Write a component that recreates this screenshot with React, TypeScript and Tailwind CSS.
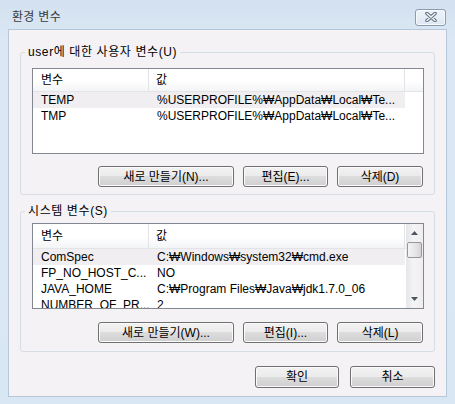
import React from 'react';

type EnvVar = { name: string; value: string };

const userVars: EnvVar[] = [
  { name: 'TEMP', value: '%USERPROFILE%₩AppData₩Local₩Te...' },
  { name: 'TMP', value: '%USERPROFILE%₩AppData₩Local₩Te...' },
];

const systemVars: EnvVar[] = [
  { name: 'ComSpec', value: 'C:₩Windows₩system32₩cmd.exe' },
  { name: 'FP_NO_HOST_C...', value: 'NO' },
  { name: 'JAVA_HOME', value: 'C:₩Program Files₩Java₩jdk1.7.0_06' },
  { name: 'NUMBER_OF_PR...', value: '2' },
];

function WinButton({ label, className = '' }: { label: string; className?: string }) {
  return (
    <button
      type="button"
      className={`flex items-center justify-center rounded-[3px] border border-[#707070] bg-[linear-gradient(to_bottom,#f2f2f2_0%,#ebebeb_50%,#dddddd_50%,#cfcfcf_100%)] shadow-[inset_0_0_0_1px_#fbfbfb] text-[12px] leading-[14px] text-black ${className}`}
    >
      {label}
    </button>
  );
}

function Arrow({ down = false }: { down?: boolean }) {
  return (
    <svg width="7" height="4" viewBox="0 0 7 4">
      {down ? <path d="M0 0 H7 L3.5 4 Z" fill="#4d5560" /> : <path d="M0 4 H7 L3.5 0 Z" fill="#4d5560" />}
    </svg>
  );
}

function ScrollBar() {
  return (
    <div className="w-[17px] shrink-0 flex flex-col bg-[linear-gradient(to_right,#e6e6e9,#f4f4f6_45%,#eeeef1)]">
      <div className="h-[18px] flex items-center justify-center">
        <Arrow />
      </div>
      <div className="mx-[1px] h-[16px] rounded-[2px] border border-[#979797] bg-[linear-gradient(to_right,#f4f4f4,#e4e4e6_60%,#d4d4d8)]" />
      <div className="flex-1" />
      <div className="h-[18px] flex items-center justify-center">
        <Arrow down />
      </div>
    </div>
  );
}

function ListBox({ rows, headerHeight, scroll }: { rows: EnvVar[]; headerHeight: string; scroll?: boolean }) {
  return (
    <div className="ml-[11px] w-[392px] h-[86px] border border-[#828790] bg-white flex overflow-hidden">
      <div className="flex-1 min-w-0 flex flex-col">
        <div className={`flex shrink-0 ${headerHeight} bg-[linear-gradient(to_bottom,#ffffff_55%,#f3f4f6)] border-b border-[#e2e4e7]`}>
          <div className="w-[116px] shrink-0 border-r border-[#e2e4e7] pl-[8px] flex items-center">변수</div>
          <div className="w-[256px] shrink-0 border-r border-[#e2e4e7] pl-[7px] flex items-center">값</div>
          <div className="flex-1" />
        </div>
        {rows.map((row, i) => (
          <div
            key={row.name}
            className={`flex shrink-0 w-[372px] h-[16px] leading-[16px] ${i === 0 ? 'bg-[#f0eef1]' : ''}`}
          >
            <div className="w-[116px] shrink-0 pl-[8px] whitespace-nowrap overflow-hidden">{row.name}</div>
            <div className="w-[256px] shrink-0 pl-[8px] whitespace-nowrap overflow-hidden">{row.value}</div>
          </div>
        ))}
      </div>
      {scroll && <ScrollBar />}
    </div>
  );
}

function ButtonRow({ labels, className = '' }: { labels: [string, string, string]; className?: string }) {
  return (
    <div className={`flex justify-end gap-[9px] pr-[11px] ${className}`}>
      <WinButton label={labels[0]} className="w-[136px] h-[21px]" />
      <WinButton label={labels[1]} className="w-[85px] h-[21px]" />
      <WinButton label={labels[2]} className="w-[86px] h-[21px]" />
    </div>
  );
}

export default function App() {
  return (
    <div className="w-[455px] h-[404px] flex flex-col bg-[linear-gradient(to_bottom,#d3e1f0,#dbe7f4_40px,#d9e6f4)] text-[12px] text-black font-['Liberation_Sans','Noto_Sans_CJK_KR',sans-serif] overflow-hidden">
      {/* title bar */}
      <div className="h-[29px] shrink-0 flex items-center pt-[5px] pl-[12px] pr-[9px]">
        <span className="flex-1 text-[#3a3a3a] text-[12px] tracking-[0.3px]">환경 변수</span>
        <div className="w-[31px] h-[17px] rounded-[3px] border border-[#8b9bb0] bg-[linear-gradient(to_bottom,#eef3f9,#dde7f2)] shadow-[inset_0_0_0_1px_#f7fafd] flex items-center justify-center">
          <svg width="12" height="10" viewBox="0 0 12 10">
            <path d="M2 1.5 L10 8.5 M10 1.5 L2 8.5" stroke="#5f6c7c" strokeWidth="3.6" strokeLinecap="round" />
            <path d="M2 1.5 L10 8.5 M10 1.5 L2 8.5" stroke="#f4f6f9" strokeWidth="1.6" strokeLinecap="round" />
          </svg>
        </div>
      </div>

      {/* client area */}
      <div className="mx-[8px] mb-[7px] flex-1 flex flex-col border border-[#b6c7da] bg-[#f4f2f5] px-[11px]">
        <fieldset className="mt-[15px] border border-[#d6dde3] rounded-[3px] pb-[7px]">
          <legend className="ml-[4px] px-[3px] leading-[14px] tracking-[0.6px]">user에 대한 사용자 변수(U)</legend>
          <div className="mt-[9px]">
            <ListBox rows={userVars} headerHeight="h-[23px]" />
          </div>
          <ButtonRow labels={['새로 만들기(N)...', '편집(E)...', '삭제(D)']} className="mt-[12px]" />
        </fieldset>

        <fieldset className="mt-[9px] border border-[#d6dde3] rounded-[3px] pb-[8px]">
          <legend className="ml-[4px] px-[3px] leading-[14px] tracking-[0.6px]">시스템 변수(S)</legend>
          <div className="mt-[5px]">
            <ListBox rows={systemVars} headerHeight="h-[25px]" scroll />
          </div>
          <ButtonRow labels={['새로 만들기(W)...', '편집(I)...', '삭제(L)']} className="mt-[13px]" />
        </fieldset>

        <div className="mt-[14px] flex justify-end gap-[11px]">
          <WinButton label="확인" className="w-[84px] h-[22px]" />
          <WinButton label="취소" className="w-[85px] h-[22px]" />
        </div>
      </div>
    </div>
  );
}
